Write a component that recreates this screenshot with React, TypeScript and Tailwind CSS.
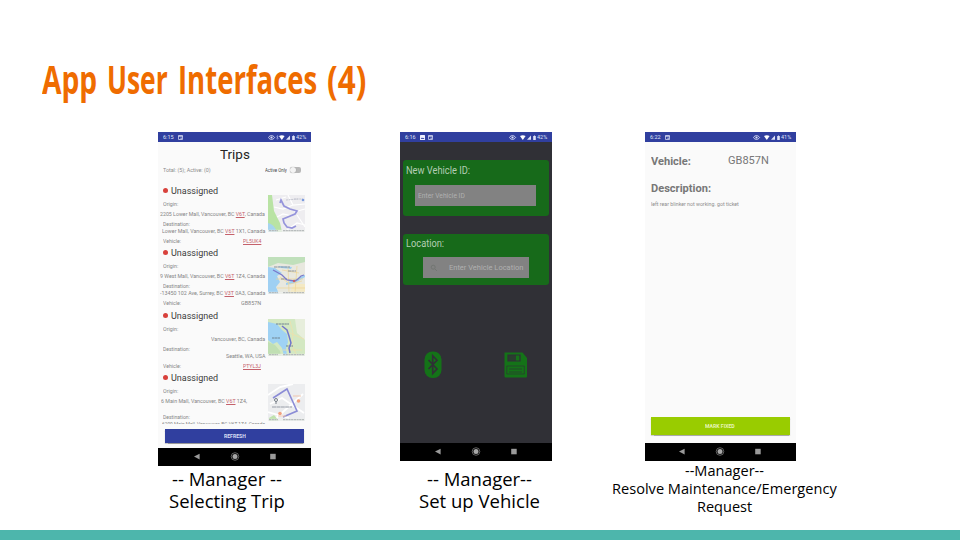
import React, { useLayoutEffect, useRef, useState } from "react";

/* Single line of text whose glyphs are condensed or widened to fill a width. */
function Fit({ w, className = "", children }: { w: number; className?: string; children: React.ReactNode }) {
  const ref = useRef<HTMLSpanElement>(null);
  const [scale, setScale] = useState(1);
  useLayoutEffect(() => {
    const natural = ref.current ? ref.current.offsetWidth : 0;
    if (natural > 0) setScale(w / natural);
  }, [w]);
  return (
    <span className="flex shrink-0 items-start" style={{ width: w }}>
      <span
        ref={ref}
        className={`shrink-0 origin-left whitespace-nowrap ${className}`}
        style={{ transform: `scaleX(${scale})` }}
      >
        {children}
      </span>
    </span>
  );
}

function StatusBar({ time, battery, extra = "none" }: { time: string; battery: string; extra?: "none" | "image" | "bt" }) {
  return (
    <div className="flex h-[10px] shrink-0 items-center bg-[#303f9f] pr-[5px] pl-[5px] text-[#dfe3f7]">
      <Fit w={11} className="text-[6px] leading-[10px]">{time}</Fit>
      {extra === "image" && (
        <svg className="ml-[4px] h-[5px] w-[5px]" viewBox="0 0 5 5">
          <rect width="5" height="5" rx=".5" fill="#eef0ff" />
          <path d="M.7 4 2 2.4 3 3.4l.6-.6L4.4 4z" fill="#303f9f" />
        </svg>
      )}
      <svg className={extra === "image" ? "ml-[3px] h-[5px] w-[5px]" : "ml-[4px] h-[5px] w-[5px]"} viewBox="0 0 5 5">
        <rect x=".4" y=".4" width="4.2" height="4.2" rx=".4" fill="none" stroke="#dfe3f7" strokeWidth=".8" />
        <path d="M.4 1.2h4.2M2.4 3.2h1.6" stroke="#dfe3f7" strokeWidth=".9" />
      </svg>
      <svg className="ml-auto h-[7px] w-[28px] shrink-0" viewBox="0 0 28 7">
        <path d="M.4 3.5C2 1 5 1 6.6 3.5 5 6 2 6 .4 3.5z" fill="none" stroke="#dfe3f7" strokeWidth=".9" />
        <circle cx="3.5" cy="3.5" r="1.1" fill="#dfe3f7" />
        {extra === "bt" && <path d="M8.6 2l1.6 2.6-.8.8V1.4l.8.8L8.6 4.8" fill="none" stroke="#aab3e6" strokeWidth=".5" />}
        <path d="M11 2.1q2.8-1.8 5.6 0L13.8 6z" fill="#fff" />
        <path d="M22 1.5V5.7h-4z" fill="#dfe3f7" />
        <path d="M25 1.5h1v.6h.8v4h-2.6v-4h.8z" fill="#dfe3f7" />
      </svg>
      <Fit w={10} className="text-[6px] leading-[10px]">{battery}</Fit>
    </div>
  );
}

function NavBar({ className }: { className: string }) {
  return (
    <div className={`flex shrink-0 justify-center bg-black ${className}`}>
      <svg className="h-[17px] w-[90px]" viewBox="0 0 90 17">
        <path d="M9.6 5.8v5.6L4 8.6z" fill="#9a9a9a" />
        <circle cx="45" cy="8.5" r="3.8" fill="none" stroke="#777" strokeWidth=".8" />
        <circle cx="45" cy="8.5" r="2.5" fill="#a8a8a8" />
        <rect x="80.2" y="5.8" width="5.5" height="5.5" fill="#9a9a9a" />
      </svg>
    </div>
  );
}

function MapCoast() {
  return (
    <>
      <rect width="37" height="37" fill="#eeedf0" />
      <path d="M0 0h4l1 8 1 8 2 4 4 8 2 9H0z" fill="#b9e3a4" />
      <path d="M0 28q6 1 9 9H0z" fill="#a5d4ef" />
      <path d="M8 5l10-3M20 0l5 10 12-1M6 12l9 2 10-4M26 17l11-3M9 22l6-3 9 2M29 20l8 12M19 35l10-7 8 2" stroke="#fff" strokeWidth="1.2" fill="none" />
      <path d="M18 5l12-1M26 4h9" stroke="#c6c8d2" strokeWidth="1" strokeDasharray="2 .6" />
      <path d="M12 8l1-3 3 6 6 3 7 2-2 3-12 5 1 4 3 4 5 1 4-2" fill="none" stroke="#9594db" strokeWidth="1.7" />
      <circle cx="35" cy="5" r="1.3" fill="#7a9bdf" />
    </>
  );
}

function MapCity() {
  return (
    <>
      <rect width="37" height="37" fill="#e8e8df" />
      <path d="M0 0h37v5L25 8 10 6 0 10z" fill="#c0e0bb" />
      <path d="M0 10l7 1 7 5-5 3 3 6-4 5 3 7H0zM10 9l14 1-1 2-10-1zM25 23l12-5v2l-10 6-9 2v-2z" fill="#9fd0f3" />
      <path d="M26 27h11v10H21z" fill="#f4e9c4" />
      <path d="M12 20l10 7 12-3M14 13l17 3M20 10l1 25M29 9l-2 27M8 22h27M9 31h28" stroke="#eed695" strokeWidth=".7" fill="none" />
      <path d="M6 10h16M20 14h8M13 22h6" stroke="#8b939b" strokeWidth="1" strokeDasharray="3 .4" />
      <path d="M5 13l9 5 5 5 8 1 3-2 3-3 3-1" fill="none" stroke="#7a79ca" strokeWidth="1.3" />
      <circle cx="26" cy="24" r="1.2" fill="#c9636b" />
    </>
  );
}

function MapRegion() {
  return (
    <>
      <rect width="37" height="37" fill="#d3e8c2" />
      <path d="M0 3l9 2 5 6 5 4 1 8-2 6 1 8h-3l-2-8-5-6-4 2-5-4z" fill="#9fd2f4" />
      <path d="M0 23l7 3 5 6 1 5H0z" fill="#c0dfb3" />
      <path d="M27 0h10v21L29 14z" fill="#e7eedc" />
      <path d="M22 2l3 12-1 12 5 11M14 8l10 7 12 5M15 31h19" stroke="#f4dfa8" strokeWidth=".7" fill="none" />
      <path d="M8 5h13M18 27h7M4 19h8" stroke="#718390" strokeWidth="1.1" strokeDasharray="2.4 .4" />
      <path d="M14 7l5 4 2 6 2 7-2 5 1 5" fill="none" stroke="#7176cc" strokeWidth="1.5" />
    </>
  );
}

function MapCampus() {
  return (
    <>
      <rect width="37" height="37" fill="#ecedef" />
      <path d="M0 11l12-8 13-3M2 20l12-6 22 15M6 36l29-26M0 28l21 6" stroke="#fff" strokeWidth="1.8" fill="none" />
      <path d="M1 34l5-3 5 6H1z" fill="#bfe2ad" />
      <path d="M5 14l14-9 10 22-14 6" fill="none" stroke="#8b8cd6" strokeWidth="1.6" />
      <path d="M4 23h20" stroke="#b4b8c0" strokeWidth="1.6" strokeDasharray="4 .4" />
      <path d="M25 12h8M10 32h8" stroke="#efc5ae" strokeWidth="1.1" />
      <circle cx="8" cy="16" r="1.5" fill="none" stroke="#777f88" strokeWidth="1" />
      <path d="M8 17v3" stroke="#777f88" />
      <circle cx="30.5" cy="17" r="1.8" fill="#f1a17f" />
      <circle cx="12" cy="29.5" r="1.8" fill="#f1a17f" />
    </>
  );
}

function Thumb({ children, className }: { children: React.ReactNode; className: string }) {
  return (
    <svg className={`ml-[2px] h-[37px] w-[37px] shrink-0 ${className}`} viewBox="0 0 37 37">
      {children}
      <rect y="34.8" width="37" height="2.2" fill="#eef0ee" opacity=".8" />
      <path d="M1 35.7h9M15 35.7h21" stroke="#9a9ea2" strokeWidth=".8" strokeDasharray="2.2 .5" />
    </svg>
  );
}

const Code = ({ children }: { children: string }) => (
  <span className="text-[#c4616b] underline decoration-[#c4616b] decoration-[0.8px] underline-offset-1">{children}</span>
);

interface Trip {
  origin: React.ReactNode;
  ow: number;
  dest: React.ReactNode;
  dw: number;
  vehicle: React.ReactNode;
  vw: number;
  map: React.ReactNode;
  tall?: boolean;
}

const trips: Trip[] = [
  { origin: <>2205 Lower Mall, Vancouver, BC <Code>V6T</Code>, Canada</>, ow: 105, dest: <>Lower Mall, Vancouver, BC <Code>V6T</Code> 1X1, Canada</>, dw: 103, vehicle: <Code>PL5UK4</Code>, vw: 18, map: <MapCoast /> },
  { origin: <>9 West Mall, Vancouver, BC <Code>V6T</Code> 1Z4, Canada</>, ow: 105, dest: <>-13450 102 Ave, Surrey, BC <Code>V3T</Code> 0A3, Canada</>, dw: 105, vehicle: "GB857N", vw: 20, map: <MapCity /> },
  { origin: "Vancouver, BC, Canada", ow: 54, dest: "Seattle, WA, USA", dw: 39, vehicle: <Code>PTYL3J</Code>, vw: 18, map: <MapRegion /> },
  { origin: <>6 Main Mall, Vancouver, BC <Code>V6T</Code> 1Z4,</>, ow: 86, dest: <>6200 Main Mall, Vancouver, BC V6T 1Z4, Canada</>, dw: 103, vehicle: null, vw: 0, map: <MapCampus />, tall: true },
];

function TripRow({ t }: { t: Trip }) {
  return (
    <div className="flex h-[62.3px] shrink-0 text-[6px] text-[#858585]">
      <div className="flex w-[107px] flex-col">
        <div className="flex h-[14px] items-center pl-[5px]">
          <span className="mb-px h-[5px] w-[5px] rounded-full bg-[#d8413c]" />
          <span className="w-[3px]" />
          <Fit w={47} className="text-[9px] leading-[16px] text-[#3a3a3a]">Unassigned</Fit>
        </div>
        <div className="h-[11px] pl-[5px]"><Fit w={15} className="leading-[12px]">Origin:</Fit></div>
        <div className={t.tall ? "flex h-[16px] pl-[3px]" : "flex h-[10px] justify-end"}>
          <Fit w={t.ow} className="leading-[10px]">{t.origin}</Fit>
        </div>
        <div className="h-[9px] pl-[5px]"><Fit w={27} className="leading-[9px]">Destination:</Fit></div>
        <div className="flex h-[7px] justify-end">
          <Fit w={t.dw} className="leading-[6px]">{t.dest}</Fit>
        </div>
        {t.vehicle && (
          <div className="flex h-[11px] justify-between pr-[4px] pl-[5px]">
            <Fit w={18} className="leading-[11px]">Vehicle:</Fit>
            <Fit w={t.vw} className="leading-[11px]">{t.vehicle}</Fit>
          </div>
        )}
      </div>
      <Thumb className={t.tall ? "mt-[13px] ml-[3px]" : "mt-[10.5px] ml-[3px]"}>{t.map}</Thumb>
    </div>
  );
}

function TripsPhone() {
  return (
    <div className="flex h-[333.5px] w-[153px] flex-col bg-[#fafafa] font-[Roboto,sans-serif]">
      <StatusBar time="6:15" battery="42%" extra="bt" />
      <div className="flex h-[26px] justify-center">
        <Fit w={30} className="text-[13px] leading-[26px] text-[#252525]">Trips</Fit>
      </div>
      <div className="flex h-[4px] items-center pl-[5px]">
        <Fit w={48} className="text-[6px] leading-[6px] text-[#8b8b8b]">Total: (5); Active: (0)</Fit>
        <span className="w-[54px]" />
        <Fit w={22} className="text-[6px] leading-[6px] text-[#444]">Active Only</Fit>
        <span className="ml-[3px] flex h-[6px] w-[11px] rounded-[2px] bg-[#b8b8b8]">
          <span className="h-[6px] w-[6px] rounded-full bg-[#f3f3f3] shadow-[0_0_1px_#888]" />
        </span>
      </div>
      <div className="mt-[12px] flex h-[240px] shrink-0 flex-col overflow-hidden">
        {trips.map((t, i) => <TripRow key={i} t={t} />)}
      </div>
      <div className="mx-[7px] mt-[5px] flex h-[13.5px] shrink-0 justify-center bg-[#303f9f] shadow-[0_0.5px_1px_#999]">
        <Fit w={22} className="text-[6px] leading-[14px] font-bold text-[#d9ddf3]">REFRESH</Fit>
      </div>
      <NavBar className="mt-auto h-[17.5px]" />
    </div>
  );
}

function VehiclePhone() {
  return (
    <div className="flex h-[329px] w-[151.5px] flex-col bg-[#303036] font-[Roboto,sans-serif]">
      <StatusBar time="6:16" battery="42%" extra="image" />
      <div className="mx-[3px] mt-[18px] h-[56px] rounded-[3px] bg-[#176a1a] pt-[4px]">
        <div className="pl-[3px]"><Fit w={64} className="text-[10px] leading-[13px] text-[#b4cdb4]">New Vehicle ID:</Fit></div>
        <div className="mt-[8px] ml-[12px] h-[21px] w-[121px] bg-[#828282] pl-[3px]">
          <Fit w={47} className="text-[7px] leading-[22px] text-[#b0b0b0]">Enter Vehicle ID</Fit>
        </div>
      </div>
      <div className="mx-[3px] mt-[18px] h-[51px] rounded-[3px] bg-[#176a1a] pt-[4px]">
        <div className="pl-[3px]"><Fit w={38} className="text-[10px] leading-[12px] text-[#b4cdb4]">Location:</Fit></div>
        <div className="mt-[7px] ml-[20px] flex h-[21px] w-[106px] items-center bg-[#828282]">
          <svg className="mx-[7px] h-[8px] w-[8px] shrink-0" viewBox="0 0 8 8">
            <circle cx="3.2" cy="3.2" r="2" fill="none" stroke="#727672" />
            <path d="M5 5l2 2" stroke="#727672" />
          </svg>
          <span className="w-[4px]" />
          <Fit w={74} className="text-[7.5px] leading-[21px] text-[#b0b0b0]">Enter Vehicle Location</Fit>
        </div>
      </div>
      <div className="mt-[66px] flex items-center pl-[24px]">
        <svg className="h-[28px] w-[18px]" viewBox="0 0 18 28">
          <rect x=".5" y=".5" width="17" height="26.5" rx="8" fill="#147318" />
          <path d="M4.5 9l8.5 9-4.3 4.5V4.8L13 9.2 4.5 18" fill="none" stroke="#303036" strokeWidth="1.6" />
        </svg>
        <svg className="ml-[61px] h-[28px] w-[25px]" viewBox="0 0 25 28">
          <path d="M1.5 1.5h18L24 7v18.5q0 1-1 1H2.5q-1 0-1-1z" fill="#147318" />
          <path d="M5 4h12v6H5z" fill="none" stroke="#303036" strokeWidth="1.2" />
          <path d="M5 4h8v6H5z" fill="#303036" opacity=".8" />
          <path d="M3.8 15h17.5v8H3.8zM6 18h13M6 21h13" fill="none" stroke="#303036" strokeWidth=".8" opacity=".8" />
        </svg>
      </div>
      <NavBar className="mt-auto h-[18px]" />
    </div>
  );
}

function MaintenancePhone() {
  return (
    <div className="flex h-[329px] w-[151.5px] flex-col bg-[#fafafa] font-[Roboto,sans-serif]">
      <StatusBar time="6:22" battery="41%" />
      <div className="mt-[11px] flex h-[16px] pl-[6px] text-[#777]">
        <Fit w={40} className="text-[10.5px] leading-[18px] font-bold">Vehicle:</Fit>
        <span className="w-[37px]" />
        <Fit w={41} className="text-[10.5px] leading-[15px]">GB857N</Fit>
      </div>
      <div className="mt-[11px] pl-[6px] text-[#777]">
        <Fit w={60} className="text-[10.5px] leading-[17px] font-bold">Description:</Fit>
      </div>
      <div className="mt-[3px] pl-[6px]">
        <Fit w={88} className="text-[6px] leading-[8px] text-[#8d8d8d]">left rear blinker not working. got ticket</Fit>
      </div>
      <div className="mx-[6px] mt-auto mb-[8.5px] flex h-[18px] shrink-0 justify-center bg-[#99cc00] shadow-[0_0.5px_1px_#aaa]">
        <Fit w={30} className="text-[6px] leading-[18px] font-bold text-[#e5f4b8]">MARK FIXED</Fit>
      </div>
      <NavBar className="h-[18px]" />
    </div>
  );
}

export default function App() {
  return (
    <div className="flex h-[540px] w-[960px] flex-col overflow-hidden bg-white font-['Open_Sans',sans-serif] text-black">
      <h1 className="flex h-[132px] shrink-0 gap-[10px] pt-[52px] pl-[42px] text-[39px] leading-[54px] font-bold text-[#ef6c00]">
        <Fit w={55}>App</Fit>
        <Fit w={61}>User</Fit>
        <Fit w={139}>Interfaces</Fit>
        <Fit w={39.5}>(4)</Fit>
      </h1>
      <main className="flex h-[398px] shrink-0 items-start pl-[158px]">
        <section className="w-[153px]">
          <TripsPhone />
          <div className="mt-[2px] -ml-[15px] flex flex-col items-center">
            <Fit w={110} className="text-[19px] leading-[22px]">-- Manager --</Fit>
            <Fit w={116} className="text-[19px] leading-[22px]">Selecting Trip</Fit>
          </div>
        </section>
        <section className="ml-[89px] w-[152px]">
          <VehiclePhone />
          <div className="mt-[6.5px] ml-[7px] flex flex-col items-center">
            <Fit w={105} className="text-[19px] leading-[22px]">-- Manager--</Fit>
            <Fit w={121} className="text-[19px] leading-[22px]">Set up Vehicle</Fit>
          </div>
        </section>
        <section className="ml-[92.5px] w-[152px]">
          <MaintenancePhone />
          <div className="mt-[1px] -mr-[43px] -ml-[35px] flex flex-col items-center">
            <Fit w={79} className="text-[14px] leading-[18px]">--Manager--</Fit>
            <Fit w={225} className="text-[14px] leading-[18px]">Resolve Maintenance/Emergency</Fit>
            <Fit w={55} className="text-[14px] leading-[18px]">Request</Fit>
          </div>
        </section>
      </main>
      <footer className="h-[10px] shrink-0 bg-[#4db6ac]" />
    </div>
  );
}
